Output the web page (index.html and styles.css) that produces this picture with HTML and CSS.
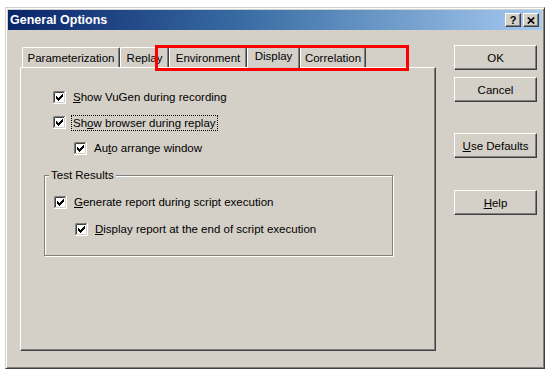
FILE: index.html
```html
<!DOCTYPE html>
<html>
<head>
<meta charset="utf-8">
<title>General Options</title>
<link rel="stylesheet" href="styles.css">
</head>
<body>
<div class="window">
  <div class="titlebar">
    <span class="title">General Options</span>
    <div class="tbtns">
      <span class="tbtn help">?</span>
      <span class="tbtn close"><svg width="8" height="7" viewBox="0 0 8 7"><path d="M0.8 0.5 L7.2 6.5 M7.2 0.5 L0.8 6.5" stroke="#000" stroke-width="1.7" fill="none"/></svg></span>
    </div>
  </div>
  <div class="content">
    <div class="tabctl">
      <div class="tabs">
        <div class="tab w1">Parameterization</div>
        <div class="tab w2">Replay</div>
        <div class="tab w3">Environment</div>
        <div class="tab sel w4">Display</div>
        <div class="tab w5">Correlation</div>
      </div>
      <div class="panel">
        <div class="row r1">
          <span class="cb"><svg width="13" height="13" viewBox="0 0 13 13"><rect width="13" height="13" fill="#fff"/><path d="M0.5 12 V0.5 H12" stroke="#808080" fill="none"/><path d="M1.5 11 V1.5 H11" stroke="#404040" fill="none"/><path d="M1.5 11.5 H11.5 V1.5" stroke="#d4d0c8" fill="none"/><path d="M3 5h1v3h-1z M4 6h1v3h-1z M5 7h1v3h-1z M6 6h1v3h-1z M7 5h1v3h-1z M8 4h1v3h-1z M9 3h1v3h-1z" fill="#000"/></svg></span>
          <span class="lbl"><u>S</u>how VuGen during recording</span>
        </div>
        <div class="row r2">
          <span class="cb"><svg width="13" height="13" viewBox="0 0 13 13"><rect width="13" height="13" fill="#fff"/><path d="M0.5 12 V0.5 H12" stroke="#808080" fill="none"/><path d="M1.5 11 V1.5 H11" stroke="#404040" fill="none"/><path d="M1.5 11.5 H11.5 V1.5" stroke="#d4d0c8" fill="none"/><path d="M3 5h1v3h-1z M4 6h1v3h-1z M5 7h1v3h-1z M6 6h1v3h-1z M7 5h1v3h-1z M8 4h1v3h-1z M9 3h1v3h-1z" fill="#000"/></svg></span>
          <span class="lbl focus">Sh<u>o</u>w browser during replay</span>
        </div>
        <div class="row r3">
          <span class="cb"><svg width="13" height="13" viewBox="0 0 13 13"><rect width="13" height="13" fill="#fff"/><path d="M0.5 12 V0.5 H12" stroke="#808080" fill="none"/><path d="M1.5 11 V1.5 H11" stroke="#404040" fill="none"/><path d="M1.5 11.5 H11.5 V1.5" stroke="#d4d0c8" fill="none"/><path d="M3 5h1v3h-1z M4 6h1v3h-1z M5 7h1v3h-1z M6 6h1v3h-1z M7 5h1v3h-1z M8 4h1v3h-1z M9 3h1v3h-1z" fill="#000"/></svg></span>
          <span class="lbl">Au<u>t</u>o arrange window</span>
        </div>
        <fieldset class="group">
          <legend>Test Results</legend>
          <div class="row g1">
            <span class="cb"><svg width="13" height="13" viewBox="0 0 13 13"><rect width="13" height="13" fill="#fff"/><path d="M0.5 12 V0.5 H12" stroke="#808080" fill="none"/><path d="M1.5 11 V1.5 H11" stroke="#404040" fill="none"/><path d="M1.5 11.5 H11.5 V1.5" stroke="#d4d0c8" fill="none"/><path d="M3 5h1v3h-1z M4 6h1v3h-1z M5 7h1v3h-1z M6 6h1v3h-1z M7 5h1v3h-1z M8 4h1v3h-1z M9 3h1v3h-1z" fill="#000"/></svg></span>
            <span class="lbl"><u>G</u>enerate report during script execution</span>
          </div>
          <div class="row g2">
            <span class="cb"><svg width="13" height="13" viewBox="0 0 13 13"><rect width="13" height="13" fill="#fff"/><path d="M0.5 12 V0.5 H12" stroke="#808080" fill="none"/><path d="M1.5 11 V1.5 H11" stroke="#404040" fill="none"/><path d="M1.5 11.5 H11.5 V1.5" stroke="#d4d0c8" fill="none"/><path d="M3 5h1v3h-1z M4 6h1v3h-1z M5 7h1v3h-1z M6 6h1v3h-1z M7 5h1v3h-1z M8 4h1v3h-1z M9 3h1v3h-1z" fill="#000"/></svg></span>
            <span class="lbl"><u>D</u>isplay report at the end of script execution</span>
          </div>
        </fieldset>
      </div>
    </div>
    <div class="buttons">
      <button class="btn b-ok">OK</button>
      <button class="btn b-cancel">Cancel</button>
      <button class="btn b-def"><u>U</u>se Defaults</button>
      <button class="btn b-help"><u>H</u>elp</button>
    </div>
  </div>
  <div class="highlight"></div>
</div>
</body>
</html>
```

FILE: styles.css
```css
html, body {
  margin: 0;
  padding: 0;
  background: #ffffff;
}
body {
  width: 554px;
  height: 378px;
  overflow: hidden;
  font-family: "Liberation Sans", Arial, sans-serif;
  font-size: 11.5px;
  color: #000;
}
.window {
  position: relative;
  box-sizing: border-box;
  margin: 7px 0 0 5px;
  width: 540px;
  height: 362px;
  padding: 2px;
  background: #d4d0c8;
  border: 1px solid;
  border-color: #d4d0c8 #404040 #404040 #d4d0c8;
  box-shadow: inset 1px 1px #fff, inset -1px -1px #808080;
}
.titlebar {
  height: 20px;
  display: flex;
  align-items: center;
  justify-content: space-between;
  padding: 0 3px 0 2px;
  background: linear-gradient(to right, #0a246a 0%, #3a6ea5 45%, #a6caf0 100%);
}
.title {
  color: #fff;
  font-weight: bold;
  font-size: 12.5px;
  letter-spacing: 0;
}
.tbtns {
  display: flex;
  gap: 2px;
}
.tbtn {
  box-sizing: border-box;
  width: 16px;
  height: 14px;
  display: flex;
  align-items: center;
  justify-content: center;
  background: #d4d0c8;
  border: 1px solid;
  border-color: #fff #404040 #404040 #fff;
  box-shadow: inset -1px -1px #808080;
  font-weight: bold;
  font-size: 11px;
  line-height: 12px;
}
.help {
  padding-bottom: 1px;
}
.content {
  display: flex;
  padding: 15px 0 0 12px;
}
.tabctl {
  width: 416px;
  display: flex;
  flex-direction: column;
}
.tabs {
  display: flex;
  align-items: flex-start;
  height: 23px;
  padding-left: 2px;
}
.tab {
  box-sizing: border-box;
  height: 20px;
  margin-top: 2px;
  display: flex;
  align-items: center;
  justify-content: center;
  padding-top: 1px;
  border-top: 1px solid #fff;
  border-left: 1px solid #fff;
  border-right: 1px solid #404040;
  box-shadow: inset -1px 0 #808080;
  border-radius: 2px 2px 0 0;
  white-space: nowrap;
}
.tab.sel {
  position: relative;
  z-index: 2;
  height: 23px;
  margin-top: 0;
  padding-top: 0;
  padding-bottom: 2px;
  background: #d4d0c8;
}
.w1 { width: 98px; }
.w2 { width: 49px; }
.w3 { width: 78px; }
.w4 { width: 53px; }
.w5 { width: 66px; }
.panel {
  box-sizing: border-box;
  margin-top: -1px;
  height: 284px;
  padding: 23px 0 0 0;
  border: 1px solid;
  border-color: #fff #404040 #404040 #fff;
  box-shadow: inset -1px -1px #808080;
}
.row {
  display: flex;
  align-items: center;
  height: 13px;
}
.cb {
  width: 13px;
  height: 13px;
  display: block;
  flex: none;
}
.cb svg {
  display: block;
}
.lbl {
  margin-left: 7px;
  line-height: 13px;
  white-space: nowrap;
}
.focus {
  margin-left: 6px;
  padding: 0 1px;
  outline: 1px dotted #000;
  outline-offset: 0;
  line-height: 14px;
}
.r1 { margin-left: 32px; }
.r2 { margin-left: 32px; margin-top: 12px; }
.r3 { margin-left: 53px; margin-top: 13px; }
.group {
  box-sizing: border-box;
  margin: 13px 0 0 23px;
  width: 349px;
  height: 88px;
  padding: 14px 0 0 9px;
  border: 1px solid #808080;
  box-shadow: inset 1px 1px #fff, 1px 1px #fff;
  min-width: 0;
}
.group legend {
  margin-left: -5px;
  padding: 0 2px;
  line-height: 14px;
  background: #d4d0c8;
}
.g2 { margin-left: 21px; margin-top: 14px; }
.buttons {
  display: flex;
  flex-direction: column;
  margin-left: 18px;
}
.btn {
  box-sizing: border-box;
  width: 83px;
  height: 25px;
  padding: 0;
  margin: 0;
  background: #d4d0c8;
  border: 1px solid;
  border-color: #fff #404040 #404040 #fff;
  box-shadow: inset -1px -1px #808080;
  font-family: "Liberation Sans", Arial, sans-serif;
  font-size: 11.5px;
  color: #000;
}
.b-cancel { margin-top: 7px; }
.b-def { margin-top: 31px; }
.b-help { margin-top: 32px; }
.highlight {
  position: absolute;
  left: 149px;
  top: 37px;
  width: 254px;
  height: 26px;
  box-sizing: border-box;
  border: 3px solid #ff0000;
  z-index: 5;
}
```
